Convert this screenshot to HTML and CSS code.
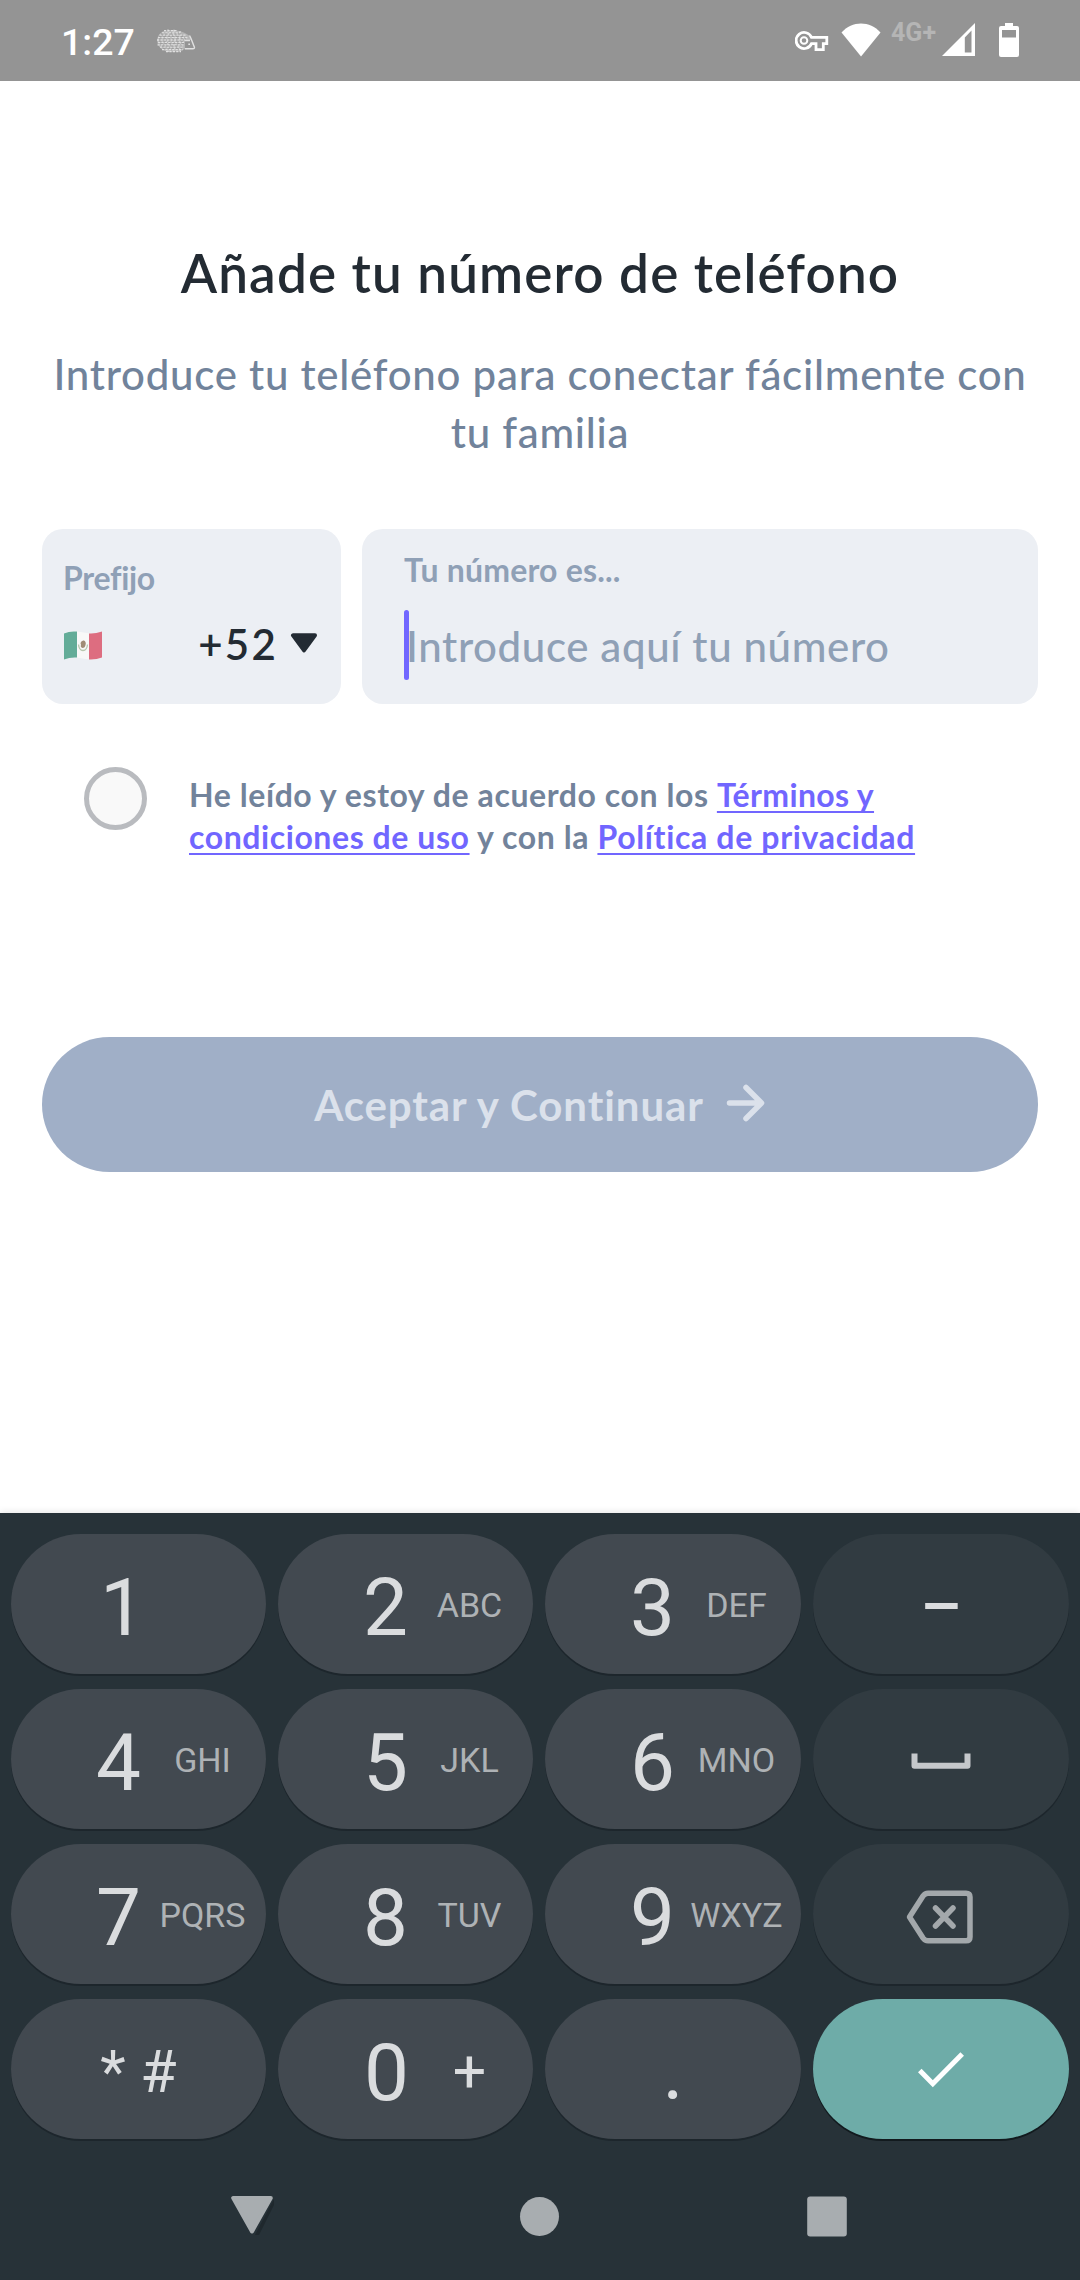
FILE: index.html
```html
<!DOCTYPE html>
<html lang="es">
<head>
<meta charset="utf-8">
<title>Añade tu número de teléfono</title>
<link rel="stylesheet" href="styles.css">
</head>
<body>
<header class="status">
  <span class="clock">1:27</span>
  <svg class="hedgehog" width="40" height="24" viewBox="0 0 40 24" fill="none" stroke="#e0e0e0">
    <path fill="#b4b4b4" stroke="none" d="M12 23C6 21 1.500 18 1 11.500C1.500 5 7 1 13 1C20 1 27 2 33 6.500L35 11H29V20L24 22.500Z"/>
    <path stroke-width="1.300" stroke-dasharray="2.200 1.200" d="M6 3.800H24M3.500 6.200H30M2 8.600H32M1 11H29M2 13.400H28M1.500 15.800H28M4 18.200H28M6 20.600H27M10 22.700H25"/>
    <path stroke-width="1.200" stroke-dasharray="2 1.500" d="M8 1.600H22M12 .6V23M18 .8V22M24 2V22"/>
    <path stroke="#969696" stroke-width=".8" stroke-dasharray="2.500 1.800" d="M5 5H26M3 7.400H29M3 9.800H30M3 12.200H28M4 14.600H28M6 17H27M7 19.400H26"/>
    <path stroke-width="1.400" d="M33.500 6.500L35 9.500L38.500 18.500Q38.500 19.800 37 19.800H29M29 11.500H34"/>
    <path stroke-width="1.600" d="M32.300 15.200H34"/>
  </svg>
  <div class="status-icons">
    <svg class="key-icon" width="34" height="21" viewBox="0 0 34 21" fill="none" stroke="#fff" stroke-width="2.800"><path stroke-linejoin="miter" d="M16.500 6.400H31.800V12.600H28.300V18.600H21V12.600H16.500A8 8 0 1 1 16.500 6.400Z"/><circle cx="9" cy="9.500" r="3.300" stroke-width="2"/></svg>
    <svg class="wifi-icon" width="40" height="34" viewBox="0 0 40 34"><path fill="#fff" d="M20 33.500L.5 9.500C11-2.500 29-2.500 39.500 9.500Z"/></svg>
    <span class="network">4G+</span>
    <svg class="signal-icon" width="33" height="33" viewBox="0 0 33 33"><path fill="#fff" fill-rule="evenodd" d="M0 33L33 0V33ZM22.800 14.500V29.500H29.500V7.600Z"/></svg>
    <svg class="battery-icon" width="20" height="34" viewBox="0 0 20 34"><path fill="#fff" fill-rule="evenodd" d="M6 0H14V3H18Q20 3 20 5V32Q20 34 18 34H2Q0 34 0 32V5Q0 3 2 3H6ZM3 7V14.500H17V7Z"/></svg>
  </div>
</header>

<main class="screen">
  <h1 class="title">Añade tu número de teléfono</h1>
  <p class="subtitle">Introduce tu teléfono para conectar fácilmente con<br>tu familia</p>

  <div class="fields">
    <div class="card prefix">
      <span class="label">Prefijo</span>
      <div class="prefix-row">
        <svg class="flag" width="38" height="29" viewBox="0 0 38 29">
          <path fill="#f8f8f8" d="M0 2.500Q6-.5 13 .6T26 2.500T38 .5V26.500Q32 28.800 26 28.500T13 26.500T0 28.500Z"/>
          <path fill="#63ac98" d="M0 2.500Q6-.3 13 .6V26.500Q6 26 0 28.500Z"/>
          <path fill="#dd6d80" d="M25 2.500Q31 3 38 .5V26.500Q32 28.800 25 28.400Z"/>
          <path fill="none" stroke="#b8c7ae" stroke-width="1.300" d="M14.500 13.500Q15 19.500 19 19.500T23.500 13.500"/>
          <path fill="#a08c76" d="M16.500 12Q17.500 9 20 9.500Q22.500 11 21.500 14Q21 17 18.500 17Q16 16 17 14Z"/>
        </svg>
        <span class="code">+52</span>
        <svg class="caret-down" width="28" height="20" viewBox="0 0 28 20"><path fill="#232b33" stroke="#232b33" stroke-width="4" stroke-linejoin="round" d="M3 2.300H25L14 17.300Z"/></svg>
      </div>
    </div>
    <div class="card number">
      <span class="label long">Tu número es...</span>
      <div class="input"><i class="cursor"></i><span class="placeholder">Introduce aquí tu número</span></div>
    </div>
  </div>

  <div class="terms">
    <span class="check"></span>
    <p class="terms-text">He leído y estoy de acuerdo con los <a class="link tight">Términos y</a><br><a class="link">condiciones de uso</a> y con la <a class="link wide">Política de privacidad</a></p>
  </div>

  <div class="submit">
    <span>Aceptar y Continuar</span>
    <svg width="40" height="38" viewBox="0 0 40 38" fill="none" stroke="#dbe1eb" stroke-width="5.500" stroke-linecap="round" stroke-linejoin="round"><path d="M3.500 19H35M20 3.500L35.500 19L20 34.500"/></svg>
  </div>
</main>

<section class="keyboard">
  <div class="keys">
    <div class="key"><span class="digit one">1</span></div>
    <div class="key"><span class="digit">2</span><span class="letters">ABC</span></div>
    <div class="key"><span class="digit">3</span><span class="letters">DEF</span></div>
    <div class="key dim"><span class="dash">–</span></div>
    <div class="key"><span class="digit">4</span><span class="letters">GHI</span></div>
    <div class="key"><span class="digit">5</span><span class="letters">JKL</span></div>
    <div class="key"><span class="digit">6</span><span class="letters">MNO</span></div>
    <div class="key dim icon"><svg width="60" height="16" viewBox="0 0 60 16" fill="none" stroke="#c5c8cb" stroke-width="6" stroke-linejoin="round"><path d="M3.500 .5V12.700H56.500V.5"/></svg></div>
    <div class="key"><span class="digit">7</span><span class="letters">PQRS</span></div>
    <div class="key"><span class="digit">8</span><span class="letters">TUV</span></div>
    <div class="key"><span class="digit">9</span><span class="letters">WXYZ</span></div>
    <div class="key dim icon"><svg class="backspace" width="68" height="54" viewBox="0 0 68 54" fill="none" stroke="#a3a8ab" stroke-width="5.500" stroke-linejoin="round" stroke-linecap="round"><path d="M3.500 27L17 6Q19 3.200 22 3.200H60Q64 3.200 64 7V47Q64 50.800 60 50.800H22Q19 50.800 17 48Z"/><path d="M29.500 18L47 36M47 18L29.500 36"/></svg></div>
    <div class="key"><span class="symbols">* #</span></div>
    <div class="key"><span class="digit zero">0</span><span class="letters plus">+</span></div>
    <div class="key"><span class="dot">.</span></div>
    <div class="key enter icon"><svg class="tick" width="46" height="36" viewBox="0 0 46 36" fill="none" stroke="#fff" stroke-width="5"><path d="M1.800 18.500L14.800 31.800L44.200 2"/></svg></div>
  </div>
  <nav class="nav">
    <svg width="44" height="42" viewBox="0 0 44 42"><path fill="#1f282d" d="M44 4L25 40L29 40L46 6Z"/><path fill="#a8adb0" stroke="#a8adb0" stroke-width="4" stroke-linejoin="round" d="M3.200 3H40.800L22 36.500Z"/></svg>
    <svg width="44" height="42" viewBox="0 0 44 42"><circle cx="21.500" cy="21.500" r="19.500" fill="#a8adb0"/></svg>
    <svg width="44" height="42" viewBox="0 0 44 42"><rect x="1.200" y="1.500" width="39.600" height="40" rx="3" fill="#a8adb0"/></svg>
  </nav>
</section>
</body>
</html>
```
FILE: styles.css
```css
* { box-sizing: border-box; }

body {
  margin: 0;
  width: 1080px;
  height: 2280px;
  display: flex;
  flex-direction: column;
  background: #fff;
  font-family: Lato, "Open Sans", sans-serif;
  overflow: hidden;
}

svg { display: block; flex: none; }

/* Status bar */
.status {
  height: 81px;
  flex: none;
  display: flex;
  align-items: flex-start;
  padding: 0 61px;
  background: #949494;
  color: #fff;
  font-family: Roboto, sans-serif;
}
.clock { font-size: 37.500px; font-weight: 500; line-height: 84px; width: 95px; }
.hedgehog { margin-top: 29px; }
.status-icons { display: flex; margin-left: auto; }
.key-icon { margin: 31px 12px 0 0; }
.wifi-icon { margin: 23px 10px 0 0; }
.network { width: 51px; font-size: 25px; font-weight: 700; line-height: 66px; color: #b5b5b5; }
.signal-icon { margin: 23px 24px 0 0; }
.battery-icon { margin-top: 23px; }

/* Form */
.screen { flex: 1; padding: 160px 42px 0; }
.title {
  margin: 0;
  text-align: center;
  font-size: 53px;
  font-weight: 600;
  line-height: 64px;
  letter-spacing: 1.150px;
  color: #232b33;
}
.subtitle {
  margin: 40px -20px 68px;
  text-align: center;
  font-size: 42px;
  font-weight: 500;
  line-height: 58px;
  letter-spacing: .74px;
  color: #71839b;
}
.fields { display: flex; gap: 21px; }
.card { height: 175px; border-radius: 21px; background: #eceff4; }
.prefix { width: 299px; padding: 29px 22px 0 21px; }
.number { flex: 1; padding: 21px 42px 0; }
.label {
  display: block;
  font-size: 32px;
  font-weight: 700;
  line-height: 40px;
  letter-spacing: -.3px;
  color: #8fa0b6;
}
.long { letter-spacing: .2px; }
.prefix-row { display: flex; margin-top: 21px; }
.flag { margin: 12px 0 0 1px; }
.code {
  margin-left: auto;
  font-size: 42px;
  font-weight: 600;
  line-height: 50px;
  letter-spacing: 2.200px;
  color: #232b33;
}
.caret-down { margin: 14px 1px 0 12px; }
.input { display: flex; margin-top: 20px; }
.cursor { width: 5px; height: 70px; border-radius: 3px; background: #7166ff; }
.placeholder {
  margin-left: -3px;
  font-size: 42px;
  font-weight: 500;
  line-height: 72px;
  height: 70px;
  letter-spacing: .62px;
  color: #8fa0b6;
}

/* Terms */
.terms { display: flex; margin-top: 63px; padding-left: 42px; }
.check { width: 63px; height: 63px; border: 5.500px solid #b9bbbf; border-radius: 50%; background: #f9f9f9; }
.terms-text {
  margin: 7px 0 0 42px;
  font-size: 32px;
  font-weight: 700;
  line-height: 42px;
  letter-spacing: .57px;
  color: #72839b;
  white-space: nowrap;
}
.link {
  color: #7166ff;
  text-decoration: underline 1.500px;
  text-underline-offset: 4px;
  text-decoration-skip-ink: none;
}
.tight { letter-spacing: .35px; }
.wide { letter-spacing: .66px; }

.submit {
  display: flex;
  justify-content: center;
  gap: 22px;
  height: 135px;
  margin-top: 179px;
  border-radius: 68px;
  background: #a0afc7;
  color: #dbe1eb;
  font-size: 42px;
  font-weight: 700;
  line-height: 136px;
  letter-spacing: .92px;
}
.submit svg { margin-top: 47px; }

/* Keyboard */
.keyboard {
  height: 767px;
  flex: none;
  padding: 21px 11px 0;
  background: #273238;
  box-shadow: 0 -1px 7px rgba(0, 0, 0, .1);
  font-family: Roboto, sans-serif;
  color: #dadcde;
}
.keys { display: grid; grid-template-columns: 255px 255px 256px 256px; gap: 15px 12px; }
.key {
  display: flex;
  height: 140px;
  border-radius: 70px;
  background: #424950;
  box-shadow: 0 2px 0 #1d262c;
}
.dim { background: #313b41; }
.enter { background: #6eaca8; box-shadow: 0 2px 0 #121a1e; }
.digit { width: 46px; margin-left: 85px; font-size: 80px; line-height: 149px; }
.one { margin-left: 89px; }
.letters { width: 121px; text-align: center; font-size: 34px; line-height: 143px; color: #aeb2b5; }
.zero { margin-left: 86px; width: 45px; }
.plus { font-size: 59px; line-height: 146px; color: inherit; }
.dash, .symbols, .dot { width: 100%; text-align: center; }
.dash { font-size: 65px; font-weight: 500; line-height: 146px; }
.symbols { font-size: 59px; line-height: 145px; }
.dot { font-size: 80px; line-height: 147px; }
.icon { justify-content: center; align-items: center; }
.icon svg { margin-top: 3px; }
.icon .backspace { margin: 5px 2px 0 0; }
.icon .tick { margin-top: 1px; }
.nav { display: flex; justify-content: center; gap: 244px; margin-top: 56px; }
```
